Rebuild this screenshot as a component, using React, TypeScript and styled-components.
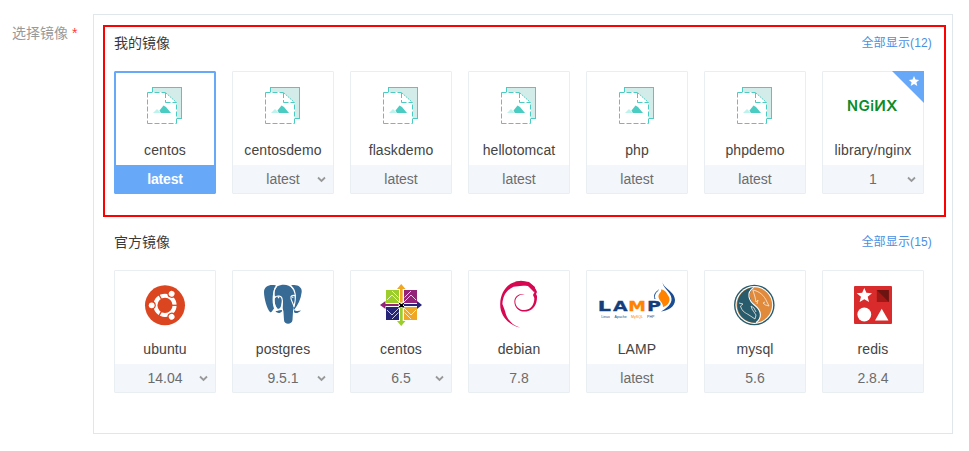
import React from "react";
import styled, { createGlobalStyle } from "styled-components";

const GlobalStyle = createGlobalStyle`
  * { box-sizing: border-box; }
  body {
    margin: 0;
    background: #fff;
    font-family: "Liberation Sans", "Noto Sans CJK SC", sans-serif;
    font-size: 14px;
    color: #444;
  }
`;

const Page = styled.div`
  display: flex;
  align-items: flex-start;
  height: 451px;
  padding-top: 14px;
  overflow: hidden;
`;

const FieldLabel = styled.label`
  width: 93px;
  flex: none;
  padding: 9px 0 0 12px;
  line-height: 20px;
  color: #999;
  white-space: nowrap;
`;

const Required = styled.span`
  color: #ff3b3b;
`;

const Panel = styled.div`
  width: 860px;
  height: 420px;
  padding: 10px 6px 0 9px;
  border: 1px solid #dfe6ec;
`;

const Group = styled.section<{ $highlighted?: boolean }>`
  height: ${(p) => (p.$highlighted ? 192 : 199)}px;
  padding: 7px 11px 0 9px;
  margin-bottom: 7px;
  border: 2px solid ${(p) => (p.$highlighted ? "#ff0000" : "transparent")};
`;

const GroupHeader = styled.header`
  display: flex;
  justify-content: space-between;
  height: 37px;
  line-height: 18px;
`;

const GroupTitle = styled.h3`
  margin: 0;
  font-size: 14px;
  font-weight: 400;
  color: #3a3a3a;
`;

const ShowAll = styled.a`
  padding-right: 1px;
  font-size: 12px;
  letter-spacing: 0.15px;
  color: #4a90e2;
`;

const Cards = styled.div`
  display: flex;
  gap: 16px;
`;

const Card = styled.div<{ $selected?: boolean }>`
  position: relative;
  flex: none;
  width: 102px;
  height: 123px;
  border: 1px solid ${(p) => (p.$selected ? "#67a9f8" : "#e9eef2")};
  border-radius: 1px;
  box-shadow: ${(p) => (p.$selected ? "inset 0 0 0 1px #67a9f8" : "none")};
`;

const Artwork = styled.svg`
  display: block;
  width: 100px;
  height: 60px;
`;

const Name = styled.div`
  height: 33px;
  padding-top: 7px;
  line-height: 22px;
  text-align: center;
  letter-spacing: 0.1px;
  color: #444;
`;

const Version = styled.div<{ $selected?: boolean }>`
  position: relative;
  height: 28px;
  line-height: 28px;
  text-align: center;
  font-weight: ${(p) => (p.$selected ? 700 : 400)};
  letter-spacing: ${(p) => (p.$selected ? "-0.2px" : "0")};
  color: ${(p) => (p.$selected ? "#fff" : "#6c6c6c")};
  background: ${(p) => (p.$selected ? "#67a9f8" : "#f3f7fb")};
`;

const Chevron = styled.svg`
  position: absolute;
  right: 7px;
  top: 11px;
  width: 9px;
  height: 7px;
`;

const Ribbon = styled.svg`
  position: absolute;
  top: -1px;
  right: -1px;
  width: 32px;
  height: 32px;
`;

const ImageIcon = () => (
  <Artwork viewBox="0 0 100 60">
    <rect x="37.5" y="15.5" width="29" height="31" fill="#d4ece9" stroke="#4accc2" />
    <path d="M32 20H50.5L62 31V52H32Z" fill="#fff" />
    <path
      d="M32.5 20.5H50.5M32.5 20.5V51.5M32.5 51.5H61.5M61.5 51.5V30.5M50.5 21V30.5M50.5 30.5H61.5"
      fill="none" stroke="#4accc2" strokeDasharray="5 2"
    />
    <path d="M50.5 20.5L61.5 30.5" stroke="#4accc2" strokeDasharray="2 .8" />
    <path d="M38 41L42 37L46 41Z" fill="#bdf2ed" />
    <path d="M46 41L44.5 38.5L48.5 33.5L51 35L56 41Z" fill="#4accc2" />
  </Artwork>
);

const NginxLogo = () => (
  <Artwork viewBox="0 0 100 60" fill="#0a8b2c" fontFamily="Inter, sans-serif" fontSize="14.2" fontWeight="600">
    <text x="24" y="38.5" textLength="11" lengthAdjust="spacingAndGlyphs">N</text>
    <text x="35.6" y="38.5" textLength="11.4" lengthAdjust="spacingAndGlyphs">G</text>
    <text x="47.2" y="38.5">i</text>
    <text x="51.2" y="38.5" textLength="11.6" lengthAdjust="spacingAndGlyphs">И</text>
    <text x="63" y="38.5" textLength="11.5" lengthAdjust="spacingAndGlyphs">X</text>
  </Artwork>
);

const UbuntuLogo = () => (
  <Artwork viewBox="0 0 100 60">
    <circle cx="50" cy="34.3" r="20" fill="#db4520" />
    <circle cx="50" cy="34.3" r="9.6" fill="none" stroke="#fff" strokeWidth="4" />
    {[0, 120, 240].map((a) => (
      <g key={a} transform={`rotate(${a} 50 34.3)`}>
        <path d="M57 34.3H63" stroke="#db4520" strokeWidth="1.3" />
        <circle cx="36.7" cy="34.3" r="4.1" fill="#db4520" />
        <circle cx="36.7" cy="34.3" r="2.9" fill="#fff" />
      </g>
    ))}
  </Artwork>
);

const PostgresLogo = () => (
  <Artwork viewBox="0 0 100 60">
    <g fill="#376a94">
      <path d="M43 14.5C37 13 31 15 31 21C31 27 34 38 37 41C38.3 42 39.5 39.5 41 37.5C38.5 31 39.5 19 43 14.5Z" />
      <path d="M58 14.5C64 13 69.3 16 68.7 21C68 28 65 34 61 39C59 35 64 20 58 14.5Z" />
      <path d="M44 15.5C49 13 56 13 59.5 18C63 23 62.5 28 61 33C60 37 60 42 59.5 49C59 54 51 54 51 49L50.4 40C49 38 50 35 50 30L46 25L42 26C41 22 41.5 18 44 15.5Z" />
      <path d="M42 27C44 25 49 25 49 29C49 33 48 38 44.5 38C42 36 41 30 42 27Z" />
      <path d="M42.5 40C45 40 47 38.5 49 39C50 41 45 44 42.5 40Z" />
      <path d="M61 39C63 40.5 66 40 68 39.5C66 42 62 43 61 41Z" />
    </g>
    <g fill="none" stroke="#fff" strokeWidth="1.1">
      <path d="M43.5 15.5C40.3 18 40.5 25 41 30C41.3 34 43 37 45 39" />
      <path d="M41.3 26.5C44 24 49 24.5 49.2 28.5C50 34 47 36 49.8 40" />
      <path d="M58 15C64 20 62.5 30 61 36C60.5 32 57 29 58 25.5Q60 23.5 63 25" />
    </g>
    <circle cx="45.5" cy="26.6" r=".8" fill="#fff" />
    <circle cx="59.8" cy="26.3" r=".7" fill="#fff" />
  </Artwork>
);

const CentosLogo = () => (
  <Artwork viewBox="0 0 100 60">
    <rect x="35" y="19" width="13" height="13" fill="#9ccd2a" />
    <rect x="53" y="19" width="13" height="13" fill="#932279" />
    <rect x="35" y="36" width="13" height="13" fill="#262577" />
    <rect x="53" y="36" width="13" height="13" fill="#efa724" />
    <g fill="none" stroke="#fff" strokeWidth=".9" strokeOpacity=".85">
      <path d="M36 29L41 24L48 31M41 20L47.5 26.5" />
      <path d="M65 29L60 24L53 31M60 20L53.5 26.5" />
      <path d="M36 39L41 44L48 37M41 48L47.5 41.5" />
      <path d="M65 39L60 44L53 37M60 48L53.5 41.5" />
    </g>
    <path d="M49 33V18H46L50.2 13L54.5 18H51.7V33Z" fill="#efa724" />
    <path d="M51.7 35V50H54.5L50.2 55L46 50H49V35Z" fill="#9ccd2a" />
    <path d="M49 35H34.5V38L29 34L34.5 30V33H49Z" fill="#932279" />
    <path d="M51.7 33H66V30L71 34L66 38V35H51.7Z" fill="#262577" />
    <rect x="47.6" y="31.5" width="5.4" height="5" fill="#fff" />
    <path d="M48 32H49.5V33H51.5V32H53V33.5H52V35H53V36.5H51.5V36H49.5V36.5H48V35H49V33.5H48Z" fill="#000" />
  </Artwork>
);

const DebianLogo = () => (
  <Artwork viewBox="0 0 100 60" fill="#d70751">
    <path d="M51 56.6C40 54 31 45 31.2 33C31.4 20 40 10 51.5 10.3C60 10.4 66 15 68 21L67 23L68 25C68.3 33 65 39 57.5 40.5C50 41.5 45 36 45.4 30C45.7 25 51 21.5 56.5 23.7C52 23 47.5 25 46.5 29C45.5 34 49 39.3 56 39C63 38.5 65.5 32 65.3 27L64 24L65.5 21C63.5 19 62 15 57 14.5L51 15L44.5 15.7C38 19 34 24 33.4 33L36 40C37.5 47 42 54 51 56.6Z" />
    <path d="M46 10.7L52 9.8L60 11L66 16L65 21L59 15L50 13Z" />
  </Artwork>
);

const LampLogo = () => (
  <Artwork viewBox="0 0 100 60">
    <path d="M75.5 10C75 17 88 20 88 29C88 36 81 39.5 74 40.5C80 37 85 33 84.5 27.5C84 20 75 17.5 75.5 10Z" fill="#1b4c91" />
    <path d="M74 18.5C79 19 80 23 82 26C84 31 80 35 76 36C76 31 72 30 71.5 26C71 22 75 22 74 18.5Z" fill="#ff8200" />
    <path d="M68 28C66.5 24 68.5 21.5 71.5 19" fill="none" stroke="#1b4c91" />
    <g fontFamily="DejaVu Sans, sans-serif" fontWeight="700" fontSize="14.5" fill="#143f7c" stroke="#143f7c" strokeWidth=".3">
      <text x="10.8" y="39.8" textLength="13.2" lengthAdjust="spacingAndGlyphs">L</text>
      <text x="26" y="39.8" textLength="14.6" lengthAdjust="spacingAndGlyphs">A</text>
      <text x="41.3" y="39.8" textLength="17.6" lengthAdjust="spacingAndGlyphs" fill="#ff8200" stroke="#ff8200">M</text>
      <text x="60" y="39.8" textLength="14" lengthAdjust="spacingAndGlyphs">P</text>
    </g>
    <g fontFamily="Liberation Sans, sans-serif" fontSize="3.6" fill="#234d84">
      <text x="14.2" y="46.9">Linux</text>
      <text x="27.5" y="46.9">Apache</text>
      <text x="44" y="46.9" fill="#ff8200">MySQL</text>
      <text x="60" y="46.9">PHP</text>
    </g>
  </Artwork>
);

const MysqlLogo = () => (
  <Artwork viewBox="0 0 100 60">
    <circle cx="49.3" cy="34" r="20.3" fill="#285b6c" />
    <circle cx="49.3" cy="34" r="18.9" fill="#fff" />
    <circle cx="49.3" cy="34" r="17.8" fill="#e28a3b" />
    <path d="M49 16.2A17.8 17.8 0 1 0 51 51.8C56 47 57 41 52 36C46 31 41 23 49 16.2Z" fill="#285b6c" />
    <path d="M48.7 16.4C40.5 22 44 30 50 34.5C57 40 57 47 51 51.7" fill="none" stroke="#fff" strokeWidth="1.1" />
    <g fill="none" stroke="#f5eee6" strokeWidth=".8" strokeLinejoin="round">
      <path d="M34 32L38 33L35.5 35C37 41 41 42 44 44L50 48L51 44L47 38L46 35L49 37L51 41" />
      <path d="M47.5 19C54 20 59 24 62 31L64 35L60.5 34L58 32L60 31M48 19.5L50 26L51 31L53 29L52 33" />
    </g>
  </Artwork>
);

const RedisLogo = () => (
  <Artwork viewBox="0 0 100 60">
    <rect x="31" y="15" width="38" height="38" rx="1" fill="#d92b2b" />
    <path d="M41.3 17L43.4 21.8L49 22.3L44.7 25.8L46 31L41.3 28.2L36.6 31L38 25.8L33.7 22.3L39.2 21.8Z" fill="#fff" />
    <rect x="53.8" y="19" width="12" height="12" fill="#a11917" />
    <path d="M53.8 19H65.8V31Z" fill="#6b1412" />
    <circle cx="41.3" cy="43.5" r="6.9" fill="#fff" />
    <path d="M58.7 37.8L65.5 49.5H52Z" fill="#fff" />
  </Artwork>
);

type ImageItem = {
  name: string;
  version: string;
  Logo: React.ComponentType;
  selected?: boolean;
  menu?: boolean;
  starred?: boolean;
};

const myImages: ImageItem[] = [
  { name: "centos", version: "latest", Logo: ImageIcon, selected: true },
  { name: "centosdemo", version: "latest", Logo: ImageIcon, menu: true },
  { name: "flaskdemo", version: "latest", Logo: ImageIcon },
  { name: "hellotomcat", version: "latest", Logo: ImageIcon },
  { name: "php", version: "latest", Logo: ImageIcon },
  { name: "phpdemo", version: "latest", Logo: ImageIcon },
  { name: "library/nginx", version: "1", Logo: NginxLogo, menu: true, starred: true },
];

const officialImages: ImageItem[] = [
  { name: "ubuntu", version: "14.04", Logo: UbuntuLogo, menu: true },
  { name: "postgres", version: "9.5.1", Logo: PostgresLogo, menu: true },
  { name: "centos", version: "6.5", Logo: CentosLogo, menu: true },
  { name: "debian", version: "7.8", Logo: DebianLogo },
  { name: "LAMP", version: "latest", Logo: LampLogo },
  { name: "mysql", version: "5.6", Logo: MysqlLogo },
  { name: "redis", version: "2.8.4", Logo: RedisLogo },
];

const ImageCard = ({ name, version, Logo, selected, menu, starred }: ImageItem) => (
  <Card $selected={selected}>
    <Logo />
    <Name>{name}</Name>
    <Version $selected={selected}>
      {version}
      {menu && (
        <Chevron viewBox="0 0 9 7">
          <path d="M1 1.5L4.5 5L8 1.5" fill="none" stroke="#999" strokeWidth="1.8" />
        </Chevron>
      )}
    </Version>
    {starred && (
      <Ribbon viewBox="0 0 32 32">
        <path d="M0 0H32V32Z" fill="#67a9f8" />
        <path d="M22 5L23.5 8.6L27.2 8.9L24.4 11.3L25.3 15L22 13L18.7 15L19.6 11.3L16.8 8.9L20.5 8.6Z" fill="#fff" />
      </Ribbon>
    )}
  </Card>
);

const ImageGroup = (props: { title: string; total: number; items: ImageItem[]; highlighted?: boolean }) => (
  <Group $highlighted={props.highlighted}>
    <GroupHeader>
      <GroupTitle>{props.title}</GroupTitle>
      <ShowAll>全部显示({props.total})</ShowAll>
    </GroupHeader>
    <Cards>
      {props.items.map((item) => (
        <ImageCard key={item.name} {...item} />
      ))}
    </Cards>
  </Group>
);

export default function App() {
  return (
    <>
      <GlobalStyle />
      <Page>
        <FieldLabel>
          选择镜像 <Required>*</Required>
        </FieldLabel>
        <Panel>
          <ImageGroup title="我的镜像" total={12} items={myImages} highlighted />
          <ImageGroup title="官方镜像" total={15} items={officialImages} />
        </Panel>
      </Page>
    </>
  );
}
